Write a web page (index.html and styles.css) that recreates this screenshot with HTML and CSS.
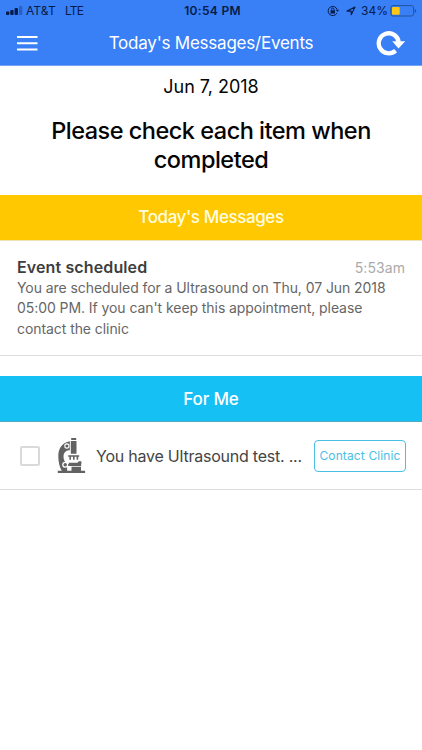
FILE: index.html
```html
<!DOCTYPE html>
<html lang="en">
<head>
<meta charset="utf-8">
<title>Today's Messages/Events</title>
<link rel="stylesheet" href="styles.css">
</head>
<body>
<header class="top">
  <div class="status">
    <div class="status-left">
      <svg class="signal" width="17" height="9" viewBox="0 0 17 9"><g fill="#071b48"><rect y="5.5" width="3.3" height="3.5" rx=".8"/><rect x="4.3" y="4" width="3.3" height="5" rx=".8"/><rect x="8.6" y="2" width="3.3" height="7" rx=".8"/><rect x="13" width="3.3" height="9" rx=".8" opacity=".3"/></g></svg>
      <span class="carrier">AT&amp;T</span><span class="network">LTE</span>
    </div>
    <span class="clock">10:54 PM</span>
    <div class="status-right">
      <svg width="12" height="12" viewBox="0 0 12 12"><path d="M9.8 8.2A4.6 4.6 0 1 1 10.1 4.5" fill="none" stroke="#071b48"/><path d="M8.8 4.7h3.2l-1.5 2.4z" fill="#071b48"/><path d="M3.6 5.3h4.3v3.2H3.6z" fill="#071b48"/><path d="M4.5 5.5V4.3a1.25 1.25 0 0 1 2.5 0v1.2" fill="none" stroke="#071b48" stroke-width=".9"/></svg>
      <svg class="arrow" width="10" height="10" viewBox="0 0 10 10"><path d="M1 5.1 9 1 5.2 8.8V5.1z" fill="none" stroke="#071b48" stroke-width="1.1" stroke-linejoin="round"/></svg>
      <span class="percent">34%</span>
      <svg width="27" height="12" viewBox="0 0 27 12"><rect x=".8" y=".6" width="22.8" height="10.4" rx="2.2" fill="none" stroke="#24539f"/><rect x="2" y="1.9" width="7.7" height="7.8" rx="1" fill="#ffc814"/><path d="M24.8 4v3.8q1.5-.5 1.5-1.9T24.8 4z" fill="#24539f"/></svg>
    </div>
  </div>
  <nav class="nav">
    <svg width="21" height="15" viewBox="0 0 21 15"><path d="M0 1h20.5M0 7.3h20.5M0 13.5h20.5" stroke="#fff" stroke-width="2"/></svg>
    <h1>Today's Messages/Events</h1>
    <svg width="30" height="26" viewBox="0 0 30 26"><path d="M19.6 20.6A10 10 0 1 1 22.7 12.3" fill="none" stroke="#fff" stroke-width="4.3"/><path d="M16.2 11.3h13L22.5 18.5z" fill="#fff"/></svg>
  </nav>
</header>
<main>
  <p class="date">Jun 7, 2018</p>
  <h2 class="intro">Please check each item when completed</h2>
  <h3 class="banner messages">Today's Messages</h3>
  <article class="message">
    <div class="message-head"><strong>Event scheduled</strong><time>5:53am</time></div>
    <p>You are scheduled for a Ultrasound on Thu, 07 Jun 2018 05:00 PM. If you can't keep this appointment, please contact the clinic</p>
  </article>
  <h3 class="banner personal">For Me</h3>
  <div class="task">
    <span class="check"></span>
    <svg class="scope" width="29" height="36" viewBox="0 0 29 36" fill="#626262">
      <path d="M14.2 0h5v2h-5zM13.8 3h5.7v12.8h-5.7z"/>
      <path d="M12.8 3.2C5.3 4.5 1.3 10.2 1.3 18.1c0 6 1.2 11 3.5 14.8h5.3v-5h14.1v-2H10.8c-3.3-1.8-4.3-4.3-4.3-7.7 0-2.7 1.5-4.7 3.7-5.6l2.6-.3z"/>
      <path d="M11.2 17.3h11v1.5h-1v3h-1.6v-3h-2v3H16v-3h-2v3h-1.6v-3h-1.2zM11.8 24.7h8.7l1.2-1.5h2.7v2.7h-12.6zM14.5 28.8h9.5v4.5h-9.5zM.8 32.8h27.3v2.2H.8z"/>
      <path d="M11.5 29.2h2v3" fill="none" stroke="#fff" stroke-width="1"/>
      <circle cx="9.9" cy="8" r="2.1" stroke="#fff" stroke-width="1.1"/>
      <circle cx="8.2" cy="26.7" r="2.4" stroke="#fff" stroke-width="1.3"/>
    </svg>
    <span class="task-text">You have Ultrasound test. ...</span>
    <button type="button">Contact Clinic</button>
  </div>
</main>
</body>
</html>
```
FILE: styles.css
```css
* { box-sizing: border-box; }
body { margin: 0; background: #fff; color: #050505; font-family: Inter, "Liberation Sans", sans-serif; }
h1, h2, h3, p { margin: 0; font-weight: 400; }
svg { display: block; flex: none; }
.top { height: 66px; background: #397ff6; border-bottom: 1px solid #75a5f5; }
.status { height: 21px; padding: 0 5px 0 6px; display: grid; grid-template-columns: 1fr auto 1fr; align-items: center; color: #071b48; font-size: 12px; line-height: 15px; white-space: nowrap; }
.status-left, .status-right { display: flex; align-items: center; }
.status-right { justify-content: flex-end; }
.carrier { margin-left: 3px; width: 39px; letter-spacing: .1px; }
.network { letter-spacing: -.8px; }
.clock { font-weight: 600; font-size: 12px; letter-spacing: .3px; padding-left: 2px; }
.arrow { margin-left: 7px; }
.percent { margin: 0 2px 0 5px; letter-spacing: 0; }
.nav { height: 44px; padding: 0 16px 0 17px; display: flex; align-items: center; }
.nav h1 { flex: 1; text-align: center; color: #fff; font-size: 17px; line-height: 20px; letter-spacing: -.23px; padding-left: 8px; }
.date { height: 42px; line-height: 42px; text-align: center; font-size: 18px; letter-spacing: -.02px; }
.intro { height: 87px; padding: 9px 40px 0; text-align: center; font-size: 23.5px; line-height: 28.5px; letter-spacing: -.5px; font-weight: 500; }
.banner { height: 45px; line-height: 45px; text-align: center; color: #fff; font-size: 17px; font-weight: 500; letter-spacing: -.4px; }
.messages { background: #ffc800; color: #fffde0; }
.message { height: 116px; margin-bottom: 20px; padding: 17px 17px 0; border-top: 1px solid #eee2b8; border-bottom: 1px solid #dedede; }
.message-head { display: flex; justify-content: space-between; height: 20px; line-height: 19px; }
.message strong { color: #3e3e3e; font-size: 16px; font-weight: 600; letter-spacing: .12px; }
.message time { color: #aaa; font-size: 14px; letter-spacing: .08px; }
.message p { color: #666; font-size: 14px; line-height: 20.4px; letter-spacing: -.07px; }
.personal { background: #14c0f4; letter-spacing: -.15px; line-height: 46px; }
.task { height: 69px; border-top: 1px solid #4eabc2; border-bottom: 1px solid #dedede; padding: 0 16px 0 20px; display: flex; align-items: center; }
.check { width: 20px; height: 20px; border: 2px solid #dadada; border-radius: 2px; }
.scope { margin-left: 17px; }
.task-text { margin-left: 10px; color: #444; font-size: 16px; letter-spacing: -.23px; white-space: nowrap; }
button { margin-left: auto; width: 92px; height: 32px; padding: 0; border: 1px solid #49bfe6; border-radius: 4px; background: #fff; color: #49bfe6; font: 12px Inter, sans-serif; letter-spacing: .13px; white-space: nowrap; }
```
